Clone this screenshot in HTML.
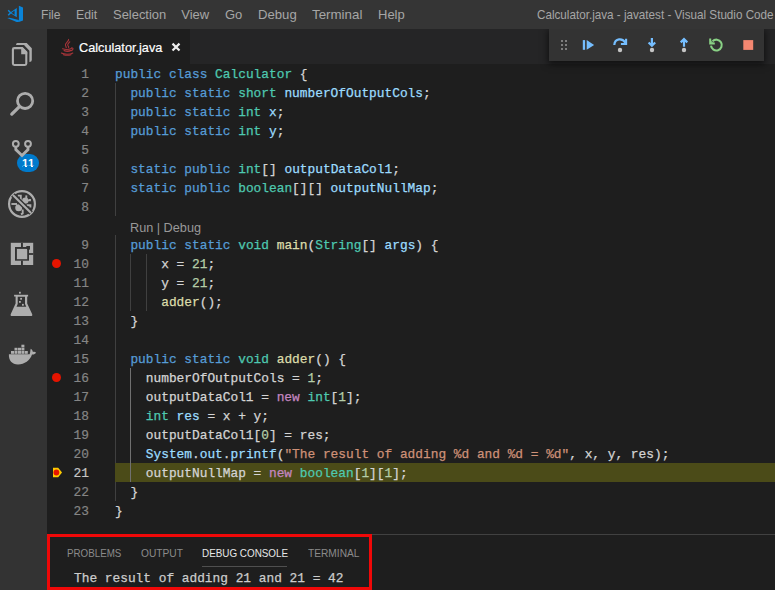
<!DOCTYPE html>
<html lang="en">
<head>
<meta charset="utf-8">
<title>Calculator.java - javatest - Visual Studio Code</title>
<style>
*{box-sizing:border-box;margin:0;padding:0}
html,body{width:775px;height:590px;overflow:hidden;background:#1e1e1e}
body{position:relative;font-family:"Liberation Sans",sans-serif;color:#d4d4d4}
.abs{position:absolute}
/* title bar */
#title{left:0;top:0;width:775px;height:29px;background:#353535;z-index:5}
#title .m{position:absolute;top:0;height:29px;line-height:29px;font-size:13px;color:#a6a6a6;white-space:nowrap;transform-origin:0 50%}
/* activity bar */
#act{left:0;top:29px;width:47px;height:561px;background:#333333}
/* tab bar */
#tabs{left:47px;top:29px;width:728px;height:35px;background:#252526}
#tab1{left:0;top:0;width:143px;height:35px;background:#1e1e1e}
#tab1 .lbl{position:absolute;left:32px;top:0;height:35px;line-height:38px;transform:scaleX(.977);-webkit-text-stroke:.2px;font-size:13px;color:#ffffff;white-space:nowrap;transform-origin:0 50%}
/* editor */
#ed{left:47px;top:64px;width:728px;height:470px;background:#1e1e1e;font-family:"Liberation Mono",monospace;font-size:12.83px}
.ln{position:absolute;left:0;width:728px;height:19px;line-height:21px;white-space:pre}
.ln .n{position:absolute;left:0;width:42px;text-align:right;color:#858585;-webkit-text-stroke:.2px}
.ln .c{position:absolute;left:68px;color:#d4d4d4;-webkit-text-stroke:.25px}
.ln.cur .n{color:#c6c6c6}
.k{color:#569cd6}.t{color:#4ec9b0}.f{color:#dcdcaa}.v{color:#9cdcfe}.s{color:#ce9178}.nu{color:#b5cea8}.p{color:#c586c0}.w{color:#d4d4d4}
.g{position:absolute;width:1px;background:#404040}
.bp{width:9.4px;height:9.4px;border-radius:50%;background:#e51400}
/* panel */
#panel{left:47px;top:534px;width:728px;height:56px;background:#1e1e1e;border-top:1px solid #414141}
#panel .pt{position:absolute;top:9px;height:18px;line-height:18px;font-size:11px;color:#8b8b8b;white-space:nowrap;transform-origin:0 50%}
#panel .pt.on{color:#e7e7e7}
#con{position:absolute;left:27px;top:34px;height:19px;line-height:19px;font-family:"Liberation Mono",monospace;font-size:12.83px;color:#cccccc;white-space:pre;-webkit-text-stroke:.25px}
#red{left:47px;top:534px;width:325px;height:56px;border:3px solid #f00808}
/* debug toolbar */
#dbg{left:549px;top:29px;width:215px;height:32px;background:#333333;box-shadow:0 2px 7px 1px rgba(0,0,0,.6)}
</style>
</head>
<body>
<div id="title" class="abs">
  <span class="m" style="left:40.5px;transform:scaleX(.93)">File</span>
  <span class="m" style="left:76px;transform:scaleX(.945)">Edit</span>
  <span class="m" style="left:113px;transform:scaleX(.995)">Selection</span>
  <span class="m" style="left:181.3px;transform:scaleX(1)">View</span>
  <span class="m" style="left:225px">Go</span>
  <span class="m" style="left:257.5px;transform:scaleX(1.01)">Debug</span>
  <span class="m" style="left:312px;transform:scaleX(1.025)">Terminal</span>
  <span class="m" style="left:378px">Help</span>
  <span class="m" style="left:537px;top:1px;font-size:12.4px;transform:scaleX(.942)">Calculator.java - javatest - Visual Studio Code</span>
</div>
<div id="act" class="abs"></div>
<div id="tabs" class="abs">
  <div id="tab1" class="abs"><span class="lbl">Calculator.java</span></div>
</div>
<div id="ed" class="abs">
  <div class="g" style="left:68px;top:19px;height:133px"></div>
  <div class="g" style="left:68px;top:171px;height:266px"></div>
  <div class="abs" id="hl" style="left:68px;top:399px;width:660px;height:19px;background:#4b4b18"></div>
  <div class="g" style="left:83px;top:190px;height:57px"></div>
  <div class="g" style="left:99px;top:190px;height:57px"></div>
  <div class="g" style="left:83px;top:304px;height:114px;background:#707070"></div>
  <div class="abs" id="lens" style="left:83px;top:152px;height:19px;line-height:25px;font-family:'Liberation Sans',sans-serif;font-size:12.7px;color:#999999;white-space:nowrap">Run | Debug</div>
  <div class="abs bp" style="left:4.8px;top:194.8px"></div>
  <div class="abs bp" style="left:4.8px;top:308.8px"></div>
  <div class="ln" style="top:0px"><span class="n">1</span><span class="c"><span class="k">public</span> <span class="k">class</span> <span class="t">Calculator</span> {</span></div>
  <div class="ln" style="top:19px"><span class="n">2</span><span class="c">  <span class="k">public</span> <span class="k">static</span> <span class="t">short</span> <span class="v">numberOfOutputCols</span>;</span></div>
  <div class="ln" style="top:38px"><span class="n">3</span><span class="c">  <span class="k">public</span> <span class="k">static</span> <span class="t">int</span> <span class="v">x</span>;</span></div>
  <div class="ln" style="top:57px"><span class="n">4</span><span class="c">  <span class="k">public</span> <span class="k">static</span> <span class="t">int</span> <span class="v">y</span>;</span></div>
  <div class="ln" style="top:76px"><span class="n">5</span><span class="c"></span></div>
  <div class="ln" style="top:95px"><span class="n">6</span><span class="c">  <span class="k">static</span> <span class="k">public</span> <span class="t">int</span>[] <span class="v">outputDataCol1</span>;</span></div>
  <div class="ln" style="top:114px"><span class="n">7</span><span class="c">  <span class="k">static</span> <span class="k">public</span> <span class="t">boolean</span>[][] <span class="v">outputNullMap</span>;</span></div>
  <div class="ln" style="top:133px"><span class="n">8</span><span class="c"></span></div>
  <div class="ln" style="top:171px"><span class="n">9</span><span class="c">  <span class="k">public</span> <span class="k">static</span> <span class="t">void</span> <span class="f">main</span>(<span class="t">String</span>[] <span class="v">args</span>) {</span></div>
  <div class="ln" style="top:190px"><span class="n">10</span><span class="c">      x = <span class="nu">21</span>;</span></div>
  <div class="ln" style="top:209px"><span class="n">11</span><span class="c">      y = <span class="nu">21</span>;</span></div>
  <div class="ln" style="top:228px"><span class="n">12</span><span class="c">      <span class="f">adder</span>();</span></div>
  <div class="ln" style="top:247px"><span class="n">13</span><span class="c">  }</span></div>
  <div class="ln" style="top:266px"><span class="n">14</span><span class="c"></span></div>
  <div class="ln" style="top:285px"><span class="n">15</span><span class="c">  <span class="k">public</span> <span class="k">static</span> <span class="t">void</span> <span class="f">adder</span>() {</span></div>
  <div class="ln" style="top:304px"><span class="n">16</span><span class="c">    numberOfOutputCols = <span class="nu">1</span>;</span></div>
  <div class="ln" style="top:323px"><span class="n">17</span><span class="c">    outputDataCol1 = <span class="p">new</span> <span class="t">int</span>[<span class="nu">1</span>];</span></div>
  <div class="ln" style="top:342px"><span class="n">18</span><span class="c">    <span class="t">int</span> <span class="v">res</span> = x + y;</span></div>
  <div class="ln" style="top:361px"><span class="n">19</span><span class="c">    outputDataCol1[<span class="nu">0</span>] = res;</span></div>
  <div class="ln" style="top:380px"><span class="n">20</span><span class="c">    <span class="v">System</span>.<span class="v">out</span>.<span class="v">printf</span>(<span class="s">"The result of adding %d and %d = %d"</span>, x, y, res);</span></div>
  <div class="ln cur" style="top:399px"><span class="n">21</span><span class="c">    outputNullMap = <span class="p">new</span> <span class="t">boolean</span>[<span class="nu">1</span>][<span class="nu">1</span>];</span></div>
  <div class="ln" style="top:418px"><span class="n">22</span><span class="c">  }</span></div>
  <div class="ln" style="top:437px"><span class="n">23</span><span class="c">}</span></div>
</div>
<div id="panel" class="abs">
  <span class="pt" style="left:20px;transform:scaleX(.89)">PROBLEMS</span>
  <span class="pt" style="left:93.6px;transform:scaleX(.927)">OUTPUT</span>
  <span class="pt on" style="left:154.8px;transform:scaleX(.897)">DEBUG CONSOLE</span>
  <span class="pt" style="left:260.7px;transform:scaleX(.925)">TERMINAL</span>
  <div class="abs" style="left:155px;top:31px;width:85px;height:1px;background:#4f4f4f"></div>
  <div id="con">The result of adding 21 and 21 = 42</div>
</div>
<svg class="abs" id="icons" style="left:0;top:0;z-index:6" width="775" height="590" viewBox="0 0 775 590">
  <!-- vscode logo -->
  <g fill="#0a84d8" stroke="none">
    <path d="M18.9 5.8 L23 7.4 V20.4 L18.9 22 Z"/>
    <path d="M7.2 18 L9.6 17.7 L18.9 20 V22 L16.6 22 Z"/>
  </g>
  <g fill="none" stroke="#0a84d8" stroke-width="1.5" stroke-linejoin="round" stroke-linecap="round">
    <path d="M16.8 8.1 V17.2 L9.9 12.7 Z M14.6 10.5 V14.9 L11.5 12.72 Z" fill="#0a84d8" fill-rule="evenodd" stroke="none"/>
    <path d="M8.2 10.3 L10.7 12.7 L8.2 15.2" stroke-linecap="butt"/>
  </g>
  <!-- java icon -->
  <g fill="none" stroke="#a8353a" stroke-width="1.1" stroke-linecap="round">
    <path d="M68.6 39.4 C69.2 41.2 65 43 65.4 45 C65.6 46 66.4 46.8 66.2 47.6"/>
    <path d="M69.8 41.8 C68.8 43 67.2 44 67.8 45.4 C68.2 46.2 69.2 46.6 68.6 47.6"/>
    <path d="M62.6 48.7 C65 49.6 69 49.5 71.4 48.5"/>
    <path d="M64.2 50.6 C66 51.3 69.5 51.2 71.2 50.4" stroke-width="1.4"/>
    <path d="M71.6 47.7 C73.6 47.6 73.4 50 71.4 50.6"/>
    <path d="M61.4 53 C64 54.6 70 54.8 72.8 53"/>
    <path d="M63.4 54.7 C66 55.4 69 55.3 71 54.7"/>
  </g>
  <!-- tab close -->
  <path d="M172.5 43.6 L179.5 50.5 M179.5 43.6 L172.5 50.5" stroke="#eeeeee" stroke-width="2.2" fill="none"/>
  <!-- ACTIVITY: files -->
  <path d="M14.3 48.1 H22.3 L26.3 52.3 V63.6 Q26.3 65 24.9 65 H14.3 Q12.9 65 12.9 63.6 V49.5 Q12.9 48.1 14.3 48.1 Z" fill="none" stroke="#adadad" stroke-width="2.1" stroke-linejoin="round"/>
  <g fill="#adadad">
    <path d="M21.2 47.2 H22.6 L27.2 52 V54.3 H21.2 Z"/>
    <path d="M17.2 43 H26.7 L31.8 48.2 V60 Q31.8 61.9 29.4 62 V50.7 L24 45.1 H16 Q16.2 43.2 17.2 43 Z"/>
  </g>
  <!-- search -->
  <circle cx="25.1" cy="100.9" r="7.6" fill="none" stroke="#adadad" stroke-width="2.8"/>
  <path d="M19.2 106.8 L11.8 114.1" stroke="#adadad" stroke-width="3.3" stroke-linecap="round" fill="none"/>
  <!-- git -->
  <g fill="none" stroke="#adadad">
    <circle cx="15.8" cy="143.8" r="2.9" stroke-width="2"/>
    <circle cx="28" cy="143.8" r="2.9" stroke-width="2"/>
    <path d="M15.8 147 V149.6 L22 155.6 L28 149.6 V147" stroke-width="2.8" stroke-linejoin="miter"/>
  </g>
  <!-- debug (disabled bug) -->
  <circle cx="22" cy="204" r="12.9" fill="none" stroke="#adadad" stroke-width="2.2"/>
  <g fill="#adadad">
    <circle cx="25.3" cy="200.6" r="3.2"/>
    <circle cx="18.7" cy="207.7" r="3.5"/>
  </g>
  <g fill="none" stroke="#adadad" stroke-width="1.9">
    <path d="M11.4 204 H17"/>
    <path d="M17.8 195.6 H20.8 V201"/>
    <path d="M26.3 195.4 V198.4"/>
    <path d="M27.4 200.4 H30 V199"/>
    <path d="M26.6 205.3 H30.4 V207.6"/>
    <path d="M22.7 209.4 V213.4 L21 214.4"/>
  </g>
  <path d="M12.9 194.9 L31.1 213.1" stroke="#333333" stroke-width="5" fill="none"/>
  <path d="M12.9 194.9 L31.1 213.1" stroke="#adadad" stroke-width="2.1" fill="none"/>
  <!-- extensions -->
  <rect x="10.8" y="242.8" width="22.4" height="22.2" fill="#adadad"/>
  <rect x="15" y="247" width="14" height="13.7" fill="#333333"/>
  <rect x="16.9" y="248.9" width="10.3" height="10.3" fill="#adadad"/>
  <rect x="21" y="242.8" width="1.9" height="4.3" fill="#333333"/>
  <rect x="21" y="260.6" width="1.9" height="4.5" fill="#333333"/>
  <rect x="28.9" y="253.1" width="4.4" height="1.8" fill="#333333"/>
  <rect x="26.3" y="246" width="3.6" height="2.9" fill="#333333"/>
  <rect x="27.2" y="246" width="2.7" height="3.7" fill="#333333"/>
  <!-- flask -->
  <path d="M15.6 296 H27.2 V303.6 L32.1 313.9 Q32.9 315.9 30.9 315.9 H12 Q10 315.9 10.8 313.9 L15.6 303.6 Z" fill="#adadad"/>
  <path d="M17.7 296.4 H25 V304 L26.3 306.7 H16.5 L17.7 304 Z" fill="#333333"/>
  <rect x="14.1" y="294.8" width="14" height="1.7" fill="#adadad"/>
  <rect x="19" y="291.8" width="1.8" height="1.8" fill="#adadad"/>
  <rect x="20.2" y="297.9" width="1.8" height="1.8" fill="#adadad"/>
  <rect x="19" y="301" width="1.8" height="1.8" fill="#adadad"/>
  <rect x="22" y="303.9" width="1.8" height="1.8" fill="#adadad"/>
  <!-- docker -->
  <g fill="#adadad">
    <path d="M8.9 354.2 H29.6 C30.6 352.6 30 350.4 30.8 348.8 C32.2 349.8 32.8 351 32.9 352 C34 351.6 35.2 351.8 36 352.4 C35.4 354 33.6 354.7 32 354.5 C30 360.6 24.6 364.4 18 364.4 C12 364.4 8.6 360.4 8.9 354.2 Z"/>
    <rect x="11" y="351" width="3" height="2.8"/><rect x="14.5" y="351" width="3" height="2.8"/><rect x="18" y="351" width="3" height="2.8"/><rect x="21.4" y="351" width="3" height="2.8"/><rect x="24.8" y="351" width="3" height="2.8"/>
    <rect x="14.5" y="347.8" width="3" height="2.7"/><rect x="18" y="347.8" width="3" height="2.7"/><rect x="21.4" y="347.8" width="3" height="2.7"/>
    <rect x="21.4" y="344.7" width="3" height="2.7"/>
  </g>
  <!-- current-line debug glyph -->
  <path d="M53 467.8 H58.2 L62 472.5 L58.2 477.3 H53 Z" fill="#ffcc00"/>
  <circle cx="56.4" cy="472.5" r="2.9" fill="#e51400"/>
</svg>
<div class="abs" id="badge" style="left:17px;top:154px;width:22px;height:18px;border-radius:9px;background:#007acc;color:#fff;font-size:11px;font-weight:bold;line-height:18px;text-align:center;letter-spacing:.6px;text-indent:.6px">11<i style="position:absolute;left:5.5px;top:12px;width:2.5px;height:1.4px;background:#007acc"></i><i style="position:absolute;left:10px;top:12px;width:4px;height:1.4px;background:#007acc"></i><i style="position:absolute;left:16px;top:12px;width:2px;height:1.4px;background:#007acc"></i></div>
<div id="red" class="abs"></div>
<div id="dbg" class="abs"></div>
<svg class="abs" id="dbgicons" style="left:0;top:0" width="775" height="590" viewBox="0 0 775 590">
  <!-- grip -->
  <g fill="#7e7e7e">
    <rect x="561" y="40" width="2" height="2"/><rect x="565" y="40" width="2" height="2"/>
    <rect x="561" y="44" width="2" height="2"/><rect x="565" y="44" width="2" height="2"/>
    <rect x="561" y="48" width="2" height="2"/><rect x="565" y="48" width="2" height="2"/>
  </g>
  <!-- continue -->
  <rect x="582.8" y="40.1" width="2.3" height="9.7" fill="#75beff"/>
  <path d="M586.7 40.1 L594.1 44.9 L586.7 49.8 Z" fill="#75beff"/>
  <!-- step over -->
  <path d="M614.3 45 C614.8 38 622.6 37.8 625.4 42.8" fill="none" stroke="#75beff" stroke-width="2.2"/>
  <path d="M626.1 38.8 V44 H620.9" fill="none" stroke="#75beff" stroke-width="2.1" stroke-linecap="butt" stroke-linejoin="miter"/>
  <circle cx="620" cy="50" r="2.2" fill="#c5c5c5"/>
  <!-- step into -->
  <path d="M651.9 38 V45.6 M648.6 42.5 L651.9 45.8 L655.2 42.5" fill="none" stroke="#75beff" stroke-width="2.2"/>
  <circle cx="652" cy="50" r="2.2" fill="#c5c5c5"/>
  <!-- step out -->
  <path d="M684 46.7 V39.4 M680.7 42.4 L684 39.1 L687.3 42.4" fill="none" stroke="#75beff" stroke-width="2.2"/>
  <circle cx="684" cy="50" r="2.2" fill="#c5c5c5"/>
  <!-- restart -->
  <path d="M712.6 41.2 A5.4 5.4 0 1 1 711 45.6" fill="none" stroke="#89d185" stroke-width="2.1"/>
  <path d="M710.2 38.4 V43.6 H714.8" fill="none" stroke="#89d185" stroke-width="2"/>
  <path d="M710.2 39.5 L714.4 43.6 H710.2 Z" fill="#89d185" opacity=".75"/>
  <!-- stop -->
  <rect x="743.3" y="40.1" width="9.9" height="9.8" fill="#f48771"/>
</svg>

</body>
</html>
